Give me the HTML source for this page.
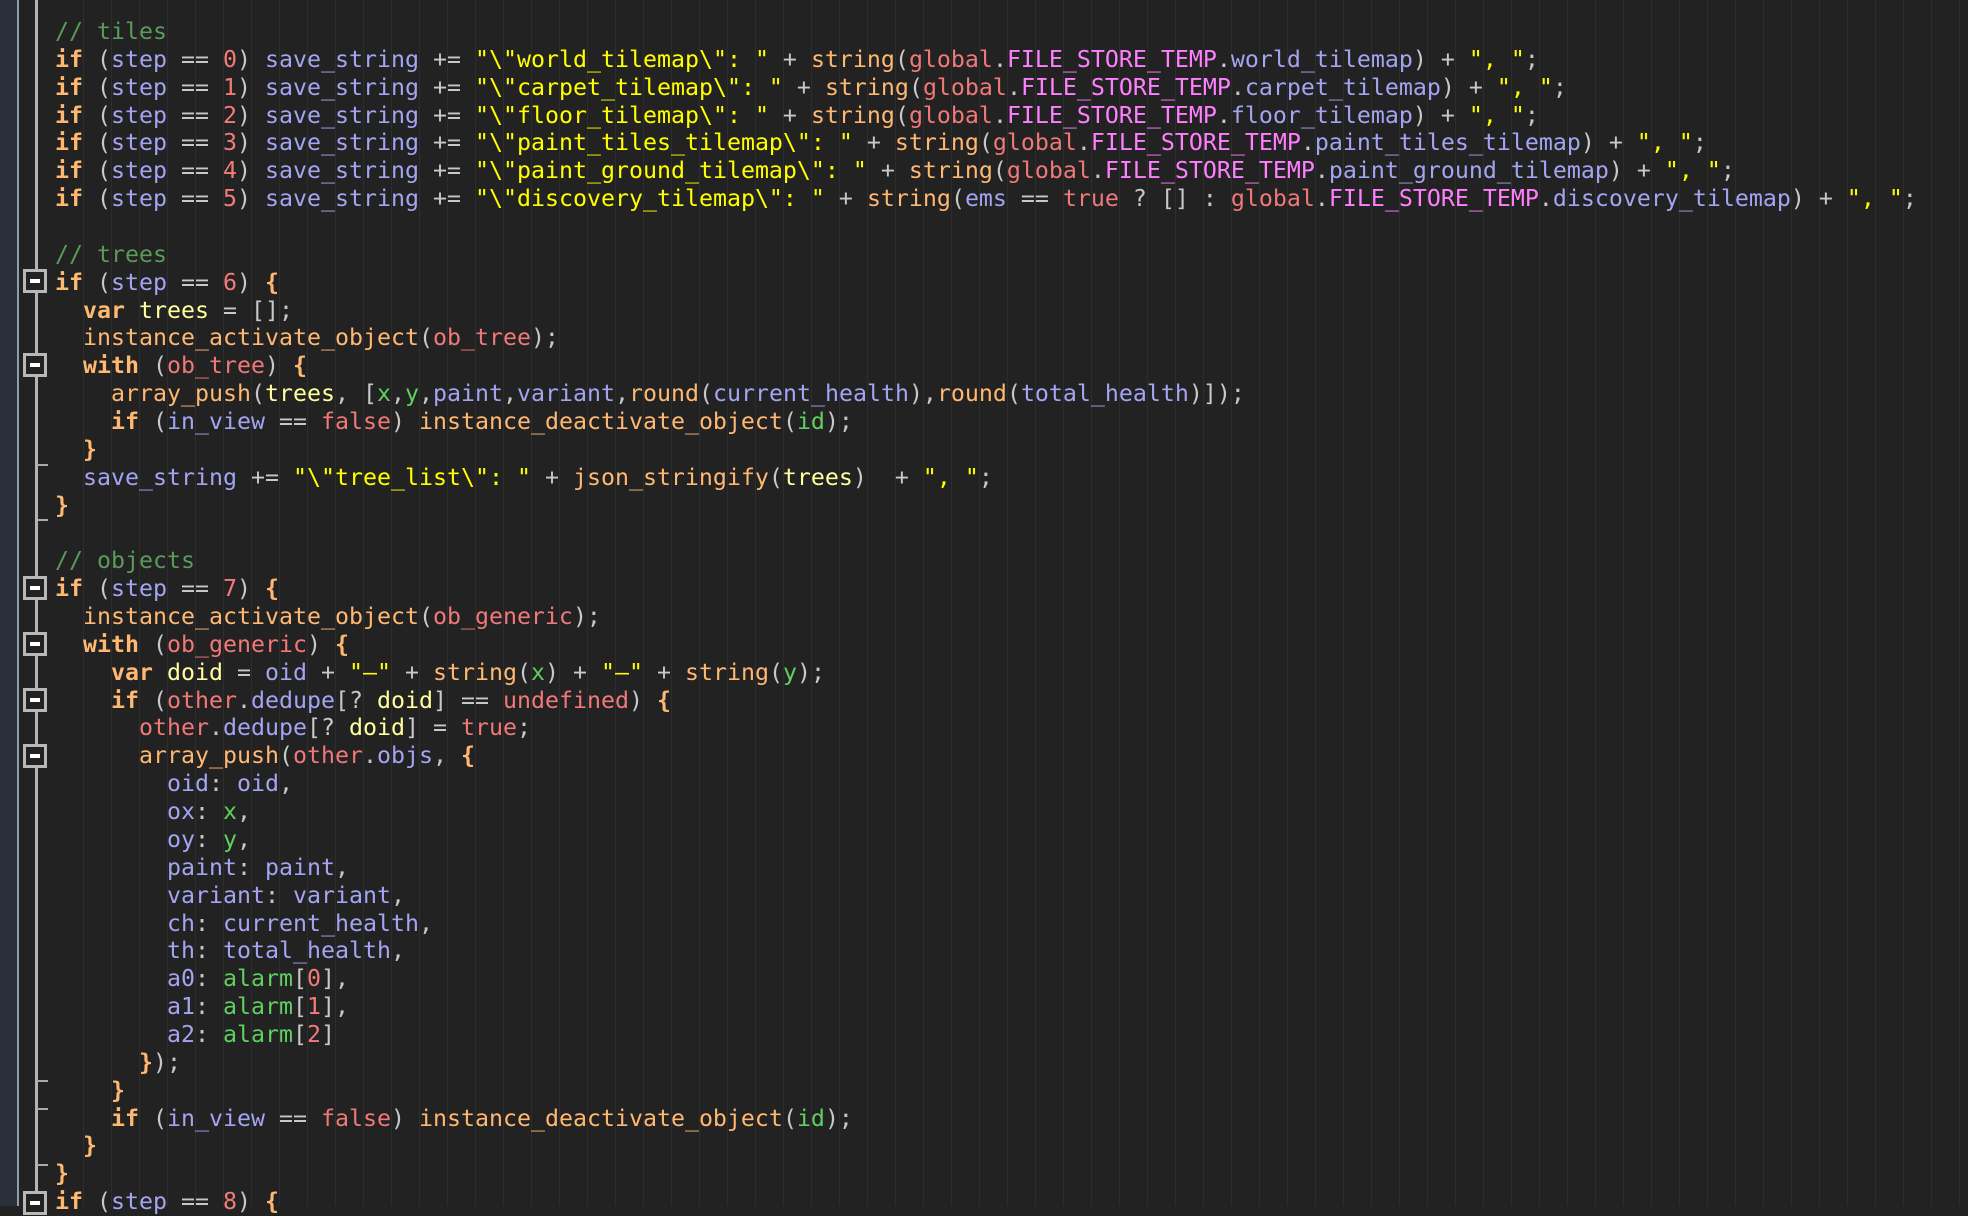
<!DOCTYPE html>
<html><head><meta charset="utf-8"><style>
html,body{margin:0;padding:0}
body{width:1968px;height:1206px;overflow:hidden;background:#222222;position:relative;font-family:"DejaVu Sans Mono","Liberation Mono",monospace}
#side{position:absolute;left:0;top:0;width:17px;height:1206px;background:#29303a}
#sl{position:absolute;left:17px;top:0;width:2px;height:1206px;background:#8d9dae}
#guides{position:absolute;left:83px;top:0;width:1885px;height:1206px;background:repeating-linear-gradient(to right,#2d2d2d 0,#2d2d2d 1px,transparent 1px,transparent 28px)}
#fl{position:absolute;left:35px;top:0;width:3px;height:1206px;background:#b4b4b4}
.box{position:absolute;left:23px;width:18px;height:18px;border:3px solid #b8b8b8;background:#222}
.box:after{content:"";position:absolute;left:4px;top:7px;width:10px;height:4px;background:#fff}
.tick{position:absolute;left:37px;width:11px;height:2px;background:#aaa}
pre{position:absolute;left:55px;top:18px;margin:0;font-family:"DejaVu Sans Mono","Liberation Mono",monospace;font-size:23.25px;line-height:27.86px;color:#c8c8c8}
.k{color:#ffb871;font-weight:bold}.f{color:#ffb871}.v{color:#a4a4f2}.s{color:#ffff00}.n{color:#f47a7a}.c{color:#5a9a5a}
.l{color:#ffff9e}.r{color:#f07878}.m{color:#ff80ff}.g{color:#5fd05f}.b{color:#ffb871;font-weight:bold}
</style></head><body>
<div id="side"></div><div id="sl"></div><div id="guides"></div><div id="fl"></div>
<div class="box" style="top:269px"></div>
<div class="box" style="top:353px"></div>
<div class="box" style="top:576px"></div>
<div class="box" style="top:632px"></div>
<div class="box" style="top:688px"></div>
<div class="box" style="top:744px"></div>
<div class="box" style="top:1191px"></div>
<div class="tick" style="top:464px"></div>
<div class="tick" style="top:519px"></div>
<div class="tick" style="top:1080px"></div>
<div class="tick" style="top:1108px"></div>
<div class="tick" style="top:1164px"></div>
<pre><span class="c">// tiles</span>
<span class="k">if</span> (<span class="v">step</span> == <span class="n">0</span>) <span class="v">save_string</span> += <span class="s">"\"world_tilemap\": "</span> + <span class="f">string</span>(<span class="r">global</span>.<span class="m">FILE_STORE_TEMP</span>.<span class="v">world_tilemap</span>) + <span class="s">", "</span>;
<span class="k">if</span> (<span class="v">step</span> == <span class="n">1</span>) <span class="v">save_string</span> += <span class="s">"\"carpet_tilemap\": "</span> + <span class="f">string</span>(<span class="r">global</span>.<span class="m">FILE_STORE_TEMP</span>.<span class="v">carpet_tilemap</span>) + <span class="s">", "</span>;
<span class="k">if</span> (<span class="v">step</span> == <span class="n">2</span>) <span class="v">save_string</span> += <span class="s">"\"floor_tilemap\": "</span> + <span class="f">string</span>(<span class="r">global</span>.<span class="m">FILE_STORE_TEMP</span>.<span class="v">floor_tilemap</span>) + <span class="s">", "</span>;
<span class="k">if</span> (<span class="v">step</span> == <span class="n">3</span>) <span class="v">save_string</span> += <span class="s">"\"paint_tiles_tilemap\": "</span> + <span class="f">string</span>(<span class="r">global</span>.<span class="m">FILE_STORE_TEMP</span>.<span class="v">paint_tiles_tilemap</span>) + <span class="s">", "</span>;
<span class="k">if</span> (<span class="v">step</span> == <span class="n">4</span>) <span class="v">save_string</span> += <span class="s">"\"paint_ground_tilemap\": "</span> + <span class="f">string</span>(<span class="r">global</span>.<span class="m">FILE_STORE_TEMP</span>.<span class="v">paint_ground_tilemap</span>) + <span class="s">", "</span>;
<span class="k">if</span> (<span class="v">step</span> == <span class="n">5</span>) <span class="v">save_string</span> += <span class="s">"\"discovery_tilemap\": "</span> + <span class="f">string</span>(<span class="v">ems</span> == <span class="r">true</span> ? [] : <span class="r">global</span>.<span class="m">FILE_STORE_TEMP</span>.<span class="v">discovery_tilemap</span>) + <span class="s">", "</span>;

<span class="c">// trees</span>
<span class="k">if</span> (<span class="v">step</span> == <span class="n">6</span>) <span class="b">{</span>
  <span class="k">var</span> <span class="l">trees</span> = [];
  <span class="f">instance_activate_object</span>(<span class="r">ob_tree</span>);
  <span class="k">with</span> (<span class="r">ob_tree</span>) <span class="b">{</span>
    <span class="f">array_push</span>(<span class="l">trees</span>, [<span class="g">x</span>,<span class="g">y</span>,<span class="v">paint</span>,<span class="v">variant</span>,<span class="f">round</span>(<span class="v">current_health</span>),<span class="f">round</span>(<span class="v">total_health</span>)]);
    <span class="k">if</span> (<span class="v">in_view</span> == <span class="r">false</span>) <span class="f">instance_deactivate_object</span>(<span class="g">id</span>);
  <span class="b">}</span>
  <span class="v">save_string</span> += <span class="s">"\"tree_list\": "</span> + <span class="f">json_stringify</span>(<span class="l">trees</span>)  + <span class="s">", "</span>;
<span class="b">}</span>

<span class="c">// objects</span>
<span class="k">if</span> (<span class="v">step</span> == <span class="n">7</span>) <span class="b">{</span>
  <span class="f">instance_activate_object</span>(<span class="r">ob_generic</span>);
  <span class="k">with</span> (<span class="r">ob_generic</span>) <span class="b">{</span>
    <span class="k">var</span> <span class="l">doid</span> = <span class="v">oid</span> + <span class="s">"–"</span> + <span class="f">string</span>(<span class="g">x</span>) + <span class="s">"–"</span> + <span class="f">string</span>(<span class="g">y</span>);
    <span class="k">if</span> (<span class="r">other</span>.<span class="v">dedupe</span>[? <span class="l">doid</span>] == <span class="r">undefined</span>) <span class="b">{</span>
      <span class="r">other</span>.<span class="v">dedupe</span>[? <span class="l">doid</span>] = <span class="r">true</span>;
      <span class="f">array_push</span>(<span class="r">other</span>.<span class="v">objs</span>, <span class="b">{</span>
        <span class="v">oid</span>: <span class="v">oid</span>,
        <span class="v">ox</span>: <span class="g">x</span>,
        <span class="v">oy</span>: <span class="g">y</span>,
        <span class="v">paint</span>: <span class="v">paint</span>,
        <span class="v">variant</span>: <span class="v">variant</span>,
        <span class="v">ch</span>: <span class="v">current_health</span>,
        <span class="v">th</span>: <span class="v">total_health</span>,
        <span class="v">a0</span>: <span class="g">alarm</span>[<span class="n">0</span>],
        <span class="v">a1</span>: <span class="g">alarm</span>[<span class="n">1</span>],
        <span class="v">a2</span>: <span class="g">alarm</span>[<span class="n">2</span>]
      <span class="b">}</span>);
    <span class="b">}</span>
    <span class="k">if</span> (<span class="v">in_view</span> == <span class="r">false</span>) <span class="f">instance_deactivate_object</span>(<span class="g">id</span>);
  <span class="b">}</span>
<span class="b">}</span>
<span class="k">if</span> (<span class="v">step</span> == <span class="n">8</span>) <span class="b">{</span>
</pre>
</body></html>
